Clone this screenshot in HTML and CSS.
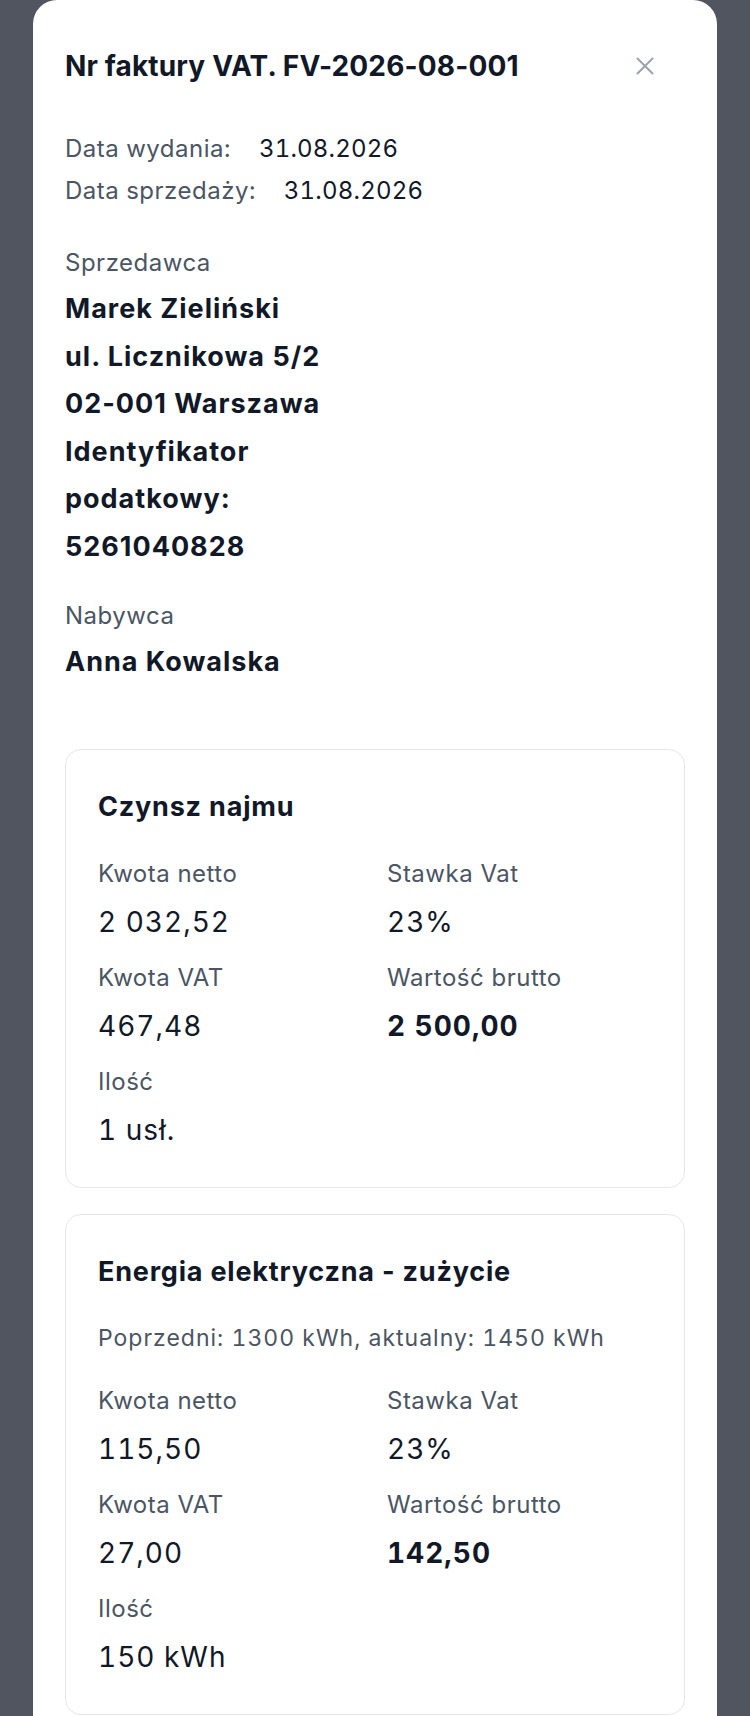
FILE: index.html
```html
<!DOCTYPE html>
<html lang="pl">
<head>
    <meta charset="UTF-8">
    <meta name="viewport" content="width=device-width, initial-scale=1.0">
    <title>Faktura VAT FV-2026-08-001</title>
    <link rel="stylesheet" href="styles.css">
</head>
<body>
    <div class="overlay">
        <div class="modal">
            <div class="modal-header">
                <h1>Nr faktury VAT. FV-2026-08-001</h1>
                <button class="close-btn" type="button" aria-label="Zamknij">
                    <svg width="18" height="18" viewBox="0 0 18 18" fill="none" stroke="currentColor" stroke-width="2" stroke-linecap="round">
                        <path d="M1.5 1.5 L16.5 16.5 M16.5 1.5 L1.5 16.5"/>
                    </svg>
                </button>
            </div>

            <div class="dates">
                <div class="date-row"><span class="label">Data wydania:</span> <span class="value">31.08.2026</span></div>
                <div class="date-row"><span class="label">Data sprzedaży:</span> <span class="value">31.08.2026</span></div>
            </div>

            <div class="party">
                <div class="party-label">Sprzedawca</div>
                <div class="party-name">Marek Zieliński</div>
                <div class="party-name">ul. Licznikowa 5/2</div>
                <div class="party-name">02-001 Warszawa</div>
                <div class="party-name">Identyfikator podatkowy: 5261040828</div>
            </div>

            <div class="party buyer">
                <div class="party-label">Nabywca</div>
                <div class="party-name">Anna Kowalska</div>
            </div>

            <div class="items">
                <div class="item-card">
                    <h2>Czynsz najmu</h2>
                    <div class="item-grid">
                        <div class="field">
                            <div class="field-label">Kwota netto</div>
                            <div class="field-value">2 032,52</div>
                        </div>
                        <div class="field">
                            <div class="field-label">Stawka Vat</div>
                            <div class="field-value">23%</div>
                        </div>
                        <div class="field">
                            <div class="field-label">Kwota VAT</div>
                            <div class="field-value">467,48</div>
                        </div>
                        <div class="field">
                            <div class="field-label">Wartość brutto</div>
                            <div class="field-value total">2 500,00</div>
                        </div>
                        <div class="field">
                            <div class="field-label">Ilość</div>
                            <div class="field-value">1 usł.</div>
                        </div>
                    </div>
                </div>

                <div class="item-card">
                    <h2>Energia elektryczna - zużycie</h2>
                    <p class="item-note">Poprzedni: 1300 kWh, aktualny: 1450 kWh</p>
                    <div class="item-grid">
                        <div class="field">
                            <div class="field-label">Kwota netto</div>
                            <div class="field-value">115,50</div>
                        </div>
                        <div class="field">
                            <div class="field-label">Stawka Vat</div>
                            <div class="field-value">23%</div>
                        </div>
                        <div class="field">
                            <div class="field-label">Kwota VAT</div>
                            <div class="field-value">27,00</div>
                        </div>
                        <div class="field">
                            <div class="field-label">Wartość brutto</div>
                            <div class="field-value total">142,50</div>
                        </div>
                        <div class="field">
                            <div class="field-label">Ilość</div>
                            <div class="field-value">150 kWh</div>
                        </div>
                    </div>
                </div>
            </div>
        </div>
    </div>
</body>
</html>
```

FILE: styles.css
```css
* {
    margin: 0;
    padding: 0;
    box-sizing: border-box;
}

body {
    font-family: Inter, 'Noto Sans', sans-serif;
    background: #515560;
    color: #111827;
    overflow: hidden;
}

.overlay {
    padding: 0 33px;
}

.modal {
    background: #fff;
    border-radius: 24px;
    padding: 32px;
}

.modal-header {
    display: flex;
    align-items: center;
    justify-content: space-between;
    height: 68px;
}

.modal-header h1 {
    font-size: 28px;
    font-weight: 700;
    letter-spacing: 0.15px;
    color: #111827;
}

.close-btn {
    background: none;
    border: none;
    color: #9ca3af;
    width: 32px;
    height: 32px;
    display: flex;
    align-items: center;
    justify-content: center;
    margin-right: 24px;
    cursor: pointer;
}

.dates {
    margin-top: 28px;
}

.date-row {
    font-size: 24px;
    line-height: 42px;
    letter-spacing: 0.5px;
    font-variant-numeric: tabular-nums;
}

.label {
    color: #4b5563;
    margin-right: 21px;
}

.value {
    color: #111827;
    letter-spacing: 0.2px;
}

.party {
    margin-top: 29px;
    width: 50%;
}

.party-label {
    font-size: 24px;
    line-height: 44px;
    letter-spacing: 0.5px;
    color: #4b5563;
}

.party-name {
    font-size: 27px;
    font-weight: 700;
    line-height: 47.6px;
    letter-spacing: 1px;
}

.buyer {
    margin-top: 23px;
}

.items {
    margin-top: 64px;
    display: flex;
    flex-direction: column;
    gap: 26px;
}

.item-card {
    border: 1px solid #e5e7eb;
    border-radius: 16px;
    padding: 32px 32px 37px;
}

.item-card h2 {
    font-size: 27px;
    font-weight: 700;
    line-height: 50px;
    letter-spacing: 0.8px;
}

.item-note {
    font-size: 23px;
    line-height: 34px;
    letter-spacing: 1px;
    font-variant-numeric: tabular-nums;
    color: #4b5563;
    margin-top: 24px;
    margin-bottom: 29px;
}

.item-grid {
    display: grid;
    grid-template-columns: 1fr 1fr;
    column-gap: 24px;
    row-gap: 19px;
    margin-top: 25px;
}

.field-label {
    font-size: 24px;
    line-height: 34px;
    letter-spacing: 0.5px;
    color: #4b5563;
}

.field-value {
    font-size: 28px;
    line-height: 40px;
    letter-spacing: 1px;
    font-variant-numeric: tabular-nums;
    margin-top: 11px;
}

.field-value.total {
    font-weight: 700;
}
```
